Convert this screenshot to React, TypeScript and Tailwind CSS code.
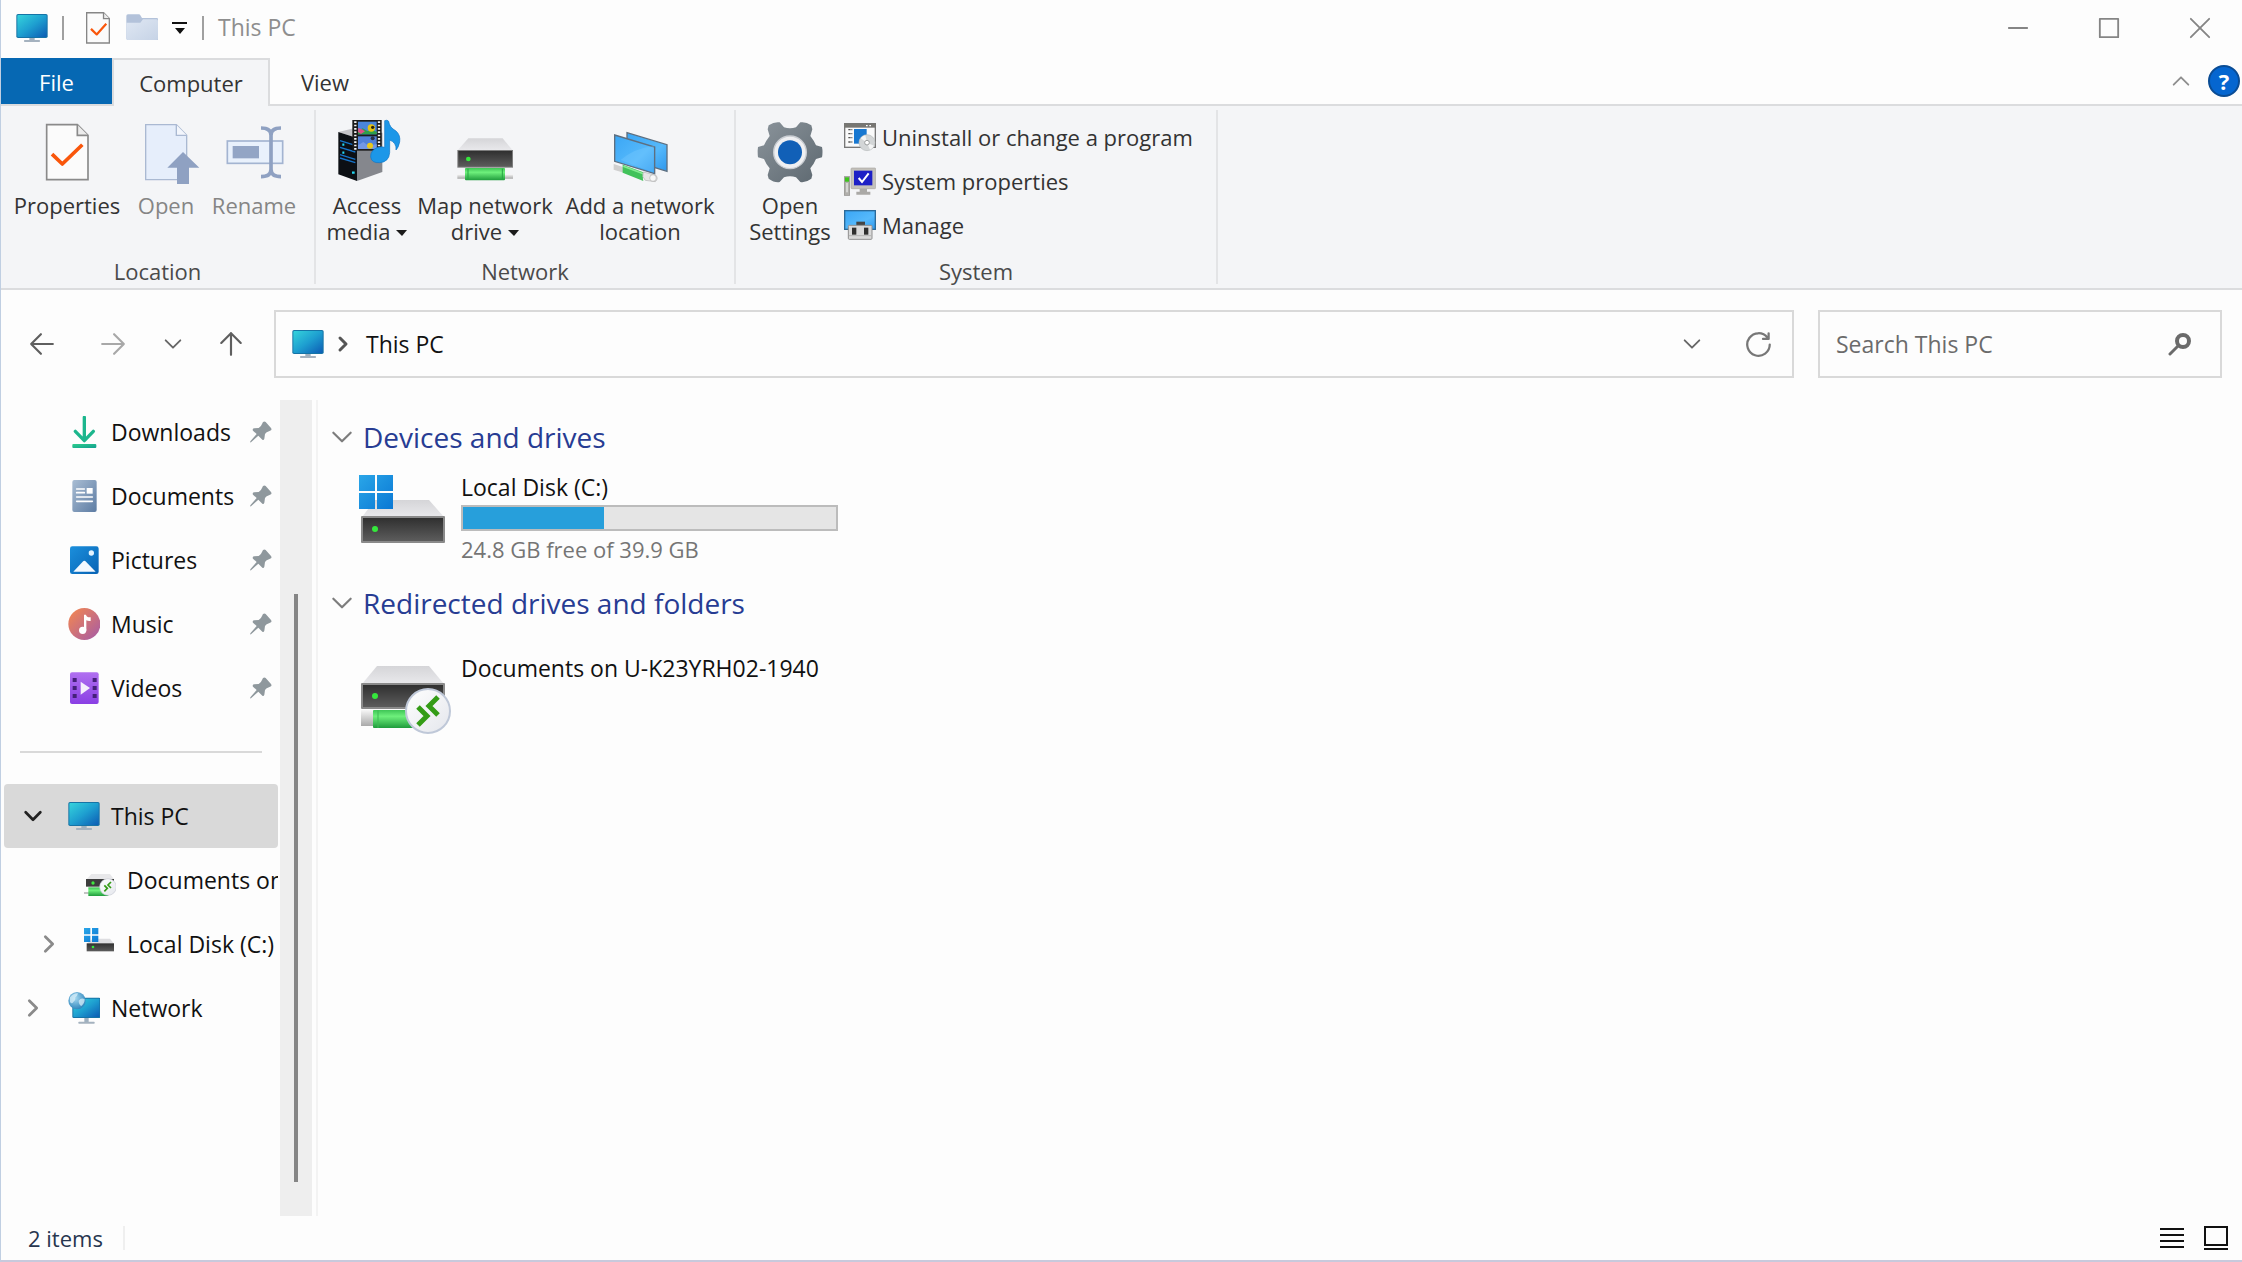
import { ReactNode, useState } from "react";

const lineIcon = { fill: "none", strokeLinecap: "round", strokeLinejoin: "round" } as const;

// Gradients shared by every icon on the page
const Gradients = () => (
  <svg className="absolute h-0 w-0" aria-hidden="true">
    <defs>
      <linearGradient id="screen" x1="0" y1="0" x2="1" y2="1">
        <stop offset="0" stopColor="#35d3dc" />
        <stop offset="0.5" stopColor="#1e9fd0" />
        <stop offset="1" stopColor="#0c5cb4" />
      </linearGradient>
      <linearGradient id="folder" x1="0" y1="0" x2="1" y2="1">
        <stop offset="0" stopColor="#dfe7f3" />
        <stop offset="1" stopColor="#c6d3e6" />
      </linearGradient>
      <linearGradient id="driveFront" x1="0" y1="0" x2="0" y2="1">
        <stop offset="0" stopColor="#303030" />
        <stop offset="1" stopColor="#5c5c5c" />
      </linearGradient>
      <linearGradient id="driveTop" x1="0" y1="0" x2="0" y2="1">
        <stop offset="0" stopColor="#d5d5d8" />
        <stop offset="1" stopColor="#e9e9ec" />
      </linearGradient>
      <linearGradient id="pipe" x1="0" y1="0" x2="0" y2="1">
        <stop offset="0" stopColor="#3fc556" />
        <stop offset="0.35" stopColor="#6ef07c" />
        <stop offset="1" stopColor="#1f9b3c" />
      </linearGradient>
      <linearGradient id="stub" x1="0" y1="0" x2="0" y2="1">
        <stop offset="0" stopColor="#f6f6f6" />
        <stop offset="1" stopColor="#a9a9a9" />
      </linearGradient>
      <linearGradient id="sky" x1="0" y1="0" x2="1" y2="1">
        <stop offset="0" stopColor="#3aa6f5" />
        <stop offset="0.6" stopColor="#56b9fb" />
        <stop offset="1" stopColor="#2d97ec" />
      </linearGradient>
      <linearGradient id="gear" x1="0" y1="0" x2="1" y2="1">
        <stop offset="0" stopColor="#8b949b" />
        <stop offset="1" stopColor="#5d6870" />
      </linearGradient>
      <linearGradient id="winLogo" x1="0" y1="0" x2="1" y2="1">
        <stop offset="0" stopColor="#2aa6e8" />
        <stop offset="1" stopColor="#0a78d4" />
      </linearGradient>
      <linearGradient id="download" x1="0" y1="0" x2="1" y2="1">
        <stop offset="0" stopColor="#2fce8d" />
        <stop offset="1" stopColor="#0f9e8e" />
      </linearGradient>
      <linearGradient id="document" x1="0" y1="0" x2="1" y2="1">
        <stop offset="0" stopColor="#a9bdd3" />
        <stop offset="1" stopColor="#5d7ca3" />
      </linearGradient>
      <linearGradient id="music" x1="0" y1="0" x2="1" y2="1">
        <stop offset="0.1" stopColor="#ee8456" />
        <stop offset="1" stopColor="#a45aa8" />
      </linearGradient>
      <linearGradient id="video" x1="0" y1="0" x2="0" y2="1">
        <stop offset="0" stopColor="#b070f0" />
        <stop offset="1" stopColor="#8a3fe4" />
      </linearGradient>
      <linearGradient id="picture" x1="0" y1="0" x2="1" y2="1">
        <stop offset="0" stopColor="#1b8fdc" />
        <stop offset="1" stopColor="#0863b4" />
      </linearGradient>
      <radialGradient id="globe" cx="0.4" cy="0.35" r="0.7">
        <stop offset="0" stopColor="#a5d8f0" />
        <stop offset="1" stopColor="#2a82ba" />
      </radialGradient>
      <linearGradient id="badge" x1="0" y1="0" x2="1" y2="1">
        <stop offset="0" stopColor="#ffffff" />
        <stop offset="1" stopColor="#e4e6ec" />
      </linearGradient>
    </defs>
  </svg>
);

const MonitorIcon = () => (
  <svg className="size-8 shrink-0" viewBox="0 0 96 96">
    <path d="M40 76h16v10H40z" fill="#9fb0bf" />
    <rect x="24" y="84" width="48" height="6" rx="2" fill="#a5b2bf" />
    <rect x="1" y="6" width="94" height="72" rx="5" fill="#1674a6" />
    <rect x="4" y="9" width="88" height="66" rx="3" fill="url(#screen)" />
  </svg>
);

const CheckedPage = ({ className }: { className: string }) => (
  <svg className={className} viewBox="137 370 130 174">
    <path d="M140 374h92l32 32v133H140z" fill="#fbfbfb" stroke="#868686" strokeWidth="8" />
    <path d="M232 374v32h32" fill="#ececec" stroke="#868686" strokeWidth="7" />
    <path d="M168 466l27 26 48-54" stroke="#f9560b" strokeWidth="12" {...lineIcon} strokeLinecap="square" />
  </svg>
);

const FolderIcon = () => (
  <svg className="size-8 shrink-0" viewBox="378 36 96 96">
    <path d="M379 48q0-5 5-5h32q4 0 6 4l4 7h44q5 0 5 5v56q0 5-5 5h-86q-5 0-5-5z" fill="#b3c2da" />
    <path d="M379 68h42l8-10h40q5 0 5 5v52q0 5-5 5h-85q-5 0-5-5z" fill="url(#folder)" />
  </svg>
);

const RibbonPropertiesIcon = () => (
  <svg className="size-16 overflow-visible" viewBox="105 360 192 192">
    <path d="M140 374h92l32 32v133H140z" fill="#fbfbfb" stroke="#8a8a8a" strokeWidth="5" />
    <path d="M232 374v32h32" fill="#ececec" stroke="#8a8a8a" strokeWidth="5" />
    <path d="M160 466l27 26 56-54" stroke="#f9560b" strokeWidth="11" {...lineIcon} strokeLinecap="square" />
  </svg>
);

const RibbonOpenIcon = () => (
  <svg className="size-16 overflow-visible" viewBox="406 360 192 192">
    <path d="M441 374h92l31 32v133H441z" fill="#e6eefb" stroke="#aab9d2" strokeWidth="4" />
    <path d="M533 374v32h31" fill="#f3f6fc" stroke="#aab9d2" strokeWidth="4" />
    <path d="M553 456l49 47h-31v49h-36v-49h-29z" fill="#8fa1c2" />
  </svg>
);

const RibbonRenameIcon = () => (
  <svg className="size-16 overflow-visible" viewBox="670 360 192 192">
    <rect x="686" y="423" width="166" height="67" fill="#e9f1fc" stroke="#a3b4d1" strokeWidth="5" />
    <rect x="702" y="438" width="79" height="37" fill="#93a5c5" />
    <path
      d="M787 384q30 0 30 22v102q0 22-30 22M847 384q-30 0-30 22v102q0 22 30 22"
      fill="none"
      stroke="#8fa1c2"
      strokeWidth="11"
    />
  </svg>
);

const AccessMediaIcon = () => (
  <svg className="size-16 overflow-visible" viewBox="75 60 192 192">
    <path d="M85 96l50-12 82 14-76 16z" fill="#c4c4c8" />
    <path d="M85 96l56 18v129l-56-20z" fill="#0c0f14" />
    <path d="M141 114l76-16v118l-76 27z" fill="#85878d" />
    <path d="M90 122l46 14M90 142l46 14M90 164l46 14M90 174l46 14" stroke="#1773c9" strokeWidth="4" />
    <path d="M97 134h6M97 158h6M126 218h8" stroke="#22d9f5" strokeWidth="7" />
    <rect x="127" y="60" width="88" height="92" fill="#1c1c1c" />
    <rect x="144" y="65" width="56" height="38" fill="#4a86dc" />
    <rect x="144" y="109" width="56" height="38" fill="#4f80d8" />
    <path d="M144 92l14-7 14 8 14-2 14 4v8h-56z" fill="#2ea04a" />
    <path d="M144 136l16-10 16 12 24-6v15h-56z" fill="#7398e4" />
    <path d="M145 84l10 4 10 6-12 8-9-6z" fill="#e04f86" />
    <circle cx="184" cy="84" r="11" fill="#e6c313" />
    <circle cx="188" cy="82" r="5" fill="#27220e" />
    <circle cx="180" cy="137" r="9" fill="#e9c81c" />
    <circle cx="188" cy="115" r="6" fill="#2b3049" />
    <path d="M136 64v86M207 64v86" stroke="#f5f5f5" strokeWidth="7" strokeDasharray="5 5" />
    <path
      d="M224 62q8-4 12 2 2 18 22 29 14 12 11 33-4 18-11 24 2-22-19-30v38q-2 28-30 30-24 2-27-17-1-21 22-29 11-3 20 0z"
      fill="#1c97e8"
      stroke="#0f76c6"
      strokeWidth="2"
    />
  </svg>
);

const MapDriveIcon = () => (
  <svg className="size-16 overflow-visible" viewBox="432 60 192 192">
    <path d="M478 115h103l30 36H446z" fill="url(#driveTop)" />
    <rect x="445" y="150" width="167" height="53" fill="#7d7d7d" />
    <rect x="448" y="153" width="161" height="47" fill="url(#driveFront)" />
    <circle cx="478" cy="177" r="7" fill="#35e83c" />
    <path d="M445 223h24v13h-24zM588 223h24v13h-24z" fill="url(#stub)" />
    <rect x="468" y="204" width="120" height="37" rx="3" fill="url(#pipe)" />
    <path d="M477 206v33M580 206v33" stroke="#27a543" strokeWidth="3" />
  </svg>
);

const AddLocationIcon = () => (
  <svg className="size-16 overflow-visible" viewBox="894 60 192 192">
    <path d="M951 98l120 36v80l-120-37z" fill="url(#sky)" stroke="#5e6f80" strokeWidth="4" />
    <path d="M911 192l30 10v16l-30-9z" fill="#cfcfcf" />
    <path d="M938 194l66 24q-8 12-4 25l-62-25z" fill="#41c25a" />
    <path d="M940 199l60 22" stroke="#86ec92" strokeWidth="5" />
    <path d="M1000 216l38 10q8 10-2 19l-30-4q-12-10-6-25z" fill="#e6e6e6" stroke="#b4b4b4" strokeWidth="2" />
    <circle cx="1029" cy="234" r="10" fill="#f8f8f8" stroke="#b0b0b0" strokeWidth="2" />
    <path d="M914 105l120 36v80l-120-37z" fill="url(#sky)" stroke="#5e6f80" strokeWidth="4" />
    <path d="M932 180q40-35 99-42v80z" fill="#7ccbff" opacity="0.35" />
  </svg>
);

const GearIcon = () => (
  <svg className="size-16 overflow-visible" viewBox="84 60 192 192">
    <path
      d="M116 76q18-12 33-9l13 15q18 6 36 0l13-15q16-3 33 9l3 12-6 20q11 14 17 28l18 5q3 15 0 31l-18 5q-6 15-17 28l6 20-3 11q-17 13-33 10l-13-14q-18-6-36 0l-13 14q-15 3-33-10l-3-11 6-20q-11-13-17-28l-18-5q-2-16 0-31l18-5q6-14 17-28l-6-20z"
      fill="url(#gear)"
    />
    <circle cx="180" cy="157" r="49" fill="#eff0f2" />
    <circle cx="180" cy="157" r="49" fill="none" stroke="#c9cdd2" strokeWidth="4" />
    <circle cx="180" cy="157" r="36" fill="#1160b7" />
  </svg>
);

const UninstallIcon = () => (
  <svg className="size-8 shrink-0" viewBox="342 66 96 96">
    <rect x="344" y="74" width="92" height="71" fill="#fafafa" stroke="#777" strokeWidth="4" />
    <path d="M343 80h94" stroke="#777672" strokeWidth="12" />
    <path d="M408 80h5M418 80h5" stroke="#fff" strokeWidth="4" />
    <path d="M355 92h12M355 104h12M355 116h12M355 129h12" stroke="#555" strokeWidth="4" strokeDasharray="7 2" />
    <rect x="372" y="90" width="38" height="44" fill="#1878d1" />
    <circle cx="411" cy="131" r="24" fill="#d3d6d7" stroke="#b8bcbd" strokeWidth="2" />
    <path d="M411 131l-19-13a24 24 0 0 1 14-9zM411 131l21 9a24 24 0 0 1-12 12z" fill="#f4f5f5" />
    <circle cx="411" cy="131" r="7" fill="#fff" stroke="#9c9f9f" strokeWidth="3" />
  </svg>
);

const SystemPropertiesIcon = () => (
  <svg className="size-8 shrink-0" viewBox="342 198 96 96">
    <rect x="363" y="207" width="74" height="62" rx="3" fill="#c3c1bb" stroke="#a9a8a4" strokeWidth="2" />
    <rect x="372" y="215" width="55" height="44" fill="#1d20c6" />
    <path d="M386 237l10 12 20-26" fill="none" stroke="#fff" strokeWidth="6" />
    <path d="M389 269h22v9h10v9h-42v-9h10z" fill="#aaa9a6" />
    <rect x="343" y="233" width="16" height="56" fill="#b0afab" stroke="#8d8c89" strokeWidth="2" />
    <rect x="345" y="235" width="12" height="13" fill="#3dc41c" />
    <rect x="349" y="252" width="4" height="28" fill="#e9e9e9" />
  </svg>
);

const ManageIcon = () => (
  <svg className="size-8 shrink-0" viewBox="342 328 96 96">
    <rect x="344" y="333" width="92" height="56" fill="url(#sky)" stroke="#2b6a99" strokeWidth="4" />
    <path d="M379 366h26v12h-26z" fill="#444" />
    <rect x="355" y="377" width="71" height="42" rx="3" fill="#d9d9d9" stroke="#8f8f8f" strokeWidth="3" />
    <path d="M357 408h67" stroke="#b3b3b3" strokeWidth="3" />
    <rect x="366" y="384" width="13" height="21" fill="#2e2e2e" />
    <rect x="402" y="384" width="13" height="21" fill="#2e2e2e" />
  </svg>
);

const DownloadsIcon = () => (
  <svg className="size-8 shrink-0" viewBox="204 78 96 96">
    <path d="M253 82v68M226 124l27 28 27-28" stroke="#1cb68d" strokeWidth="10" {...lineIcon} />
    <rect x="217" y="162" width="72" height="12" rx="3" fill="url(#download)" />
  </svg>
);

const DocumentsIcon = () => (
  <svg className="size-8 shrink-0" viewBox="204 270 96 96">
    <rect x="217" y="270" width="73" height="96" rx="6" fill="url(#document)" />
    <path d="M230 297h23M230 308h23M230 321h47M230 334h47" stroke="#fff" strokeWidth="5" strokeLinecap="round" />
    <rect x="260" y="294" width="18" height="17" fill="#fff" />
  </svg>
);

const PicturesIcon = () => (
  <svg className="size-8 shrink-0" viewBox="204 462 96 96">
    <rect x="210" y="469" width="86" height="83" rx="7" fill="url(#picture)" />
    <path d="M220 545l28-30q5-5 10 0l29 30z" fill="#f4f9ff" />
    <circle cx="274" cy="489" r="8" fill="#e4f4ff" />
  </svg>
);

const MusicIcon = () => (
  <svg className="size-8 shrink-0" viewBox="204 654 96 96">
    <circle cx="253" cy="702" r="48" fill="url(#music)" />
    <circle cx="248" cy="721" r="11" fill="#fff" />
    <path d="M252 674h6q2 9 14 8v11q-8 1-13-2v30h-7z" fill="#fff" />
  </svg>
);

const VideosIcon = () => (
  <svg className="size-8 shrink-0" viewBox="204 846 96 96">
    <rect x="210" y="847" width="86" height="95" rx="6" fill="url(#video)" />
    <path d="M224 864v62M284 864v62" stroke="#45207a" strokeWidth="12" strokeDasharray="12 12" />
    <path d="M242 875l28 19-28 20z" fill="#f5eefc" />
  </svg>
);

const NetworkIcon = () => (
  <svg className="size-8 shrink-0" viewBox="204 696 96 96">
    <path d="M253 772h13v14h-13z" fill="#9fb0bf" />
    <rect x="235" y="785" width="49" height="6" rx="2" fill="#a5b2bf" />
    <rect x="217" y="713" width="84" height="61" rx="4" fill="#1674a6" />
    <rect x="220" y="716" width="78" height="55" rx="2" fill="url(#screen)" />
    <circle cx="231" cy="722" r="26" fill="url(#globe)" />
    <path
      d="M210 712q12-14 24-12-2 10-8 12 2 8-6 14-4 8-10 0zM236 722q8-10 18-4 0 12-10 20-8-4-8-16z"
      fill="#d7eef8"
      opacity="0.75"
    />
  </svg>
);

const RemoteArrows = () => (
  <path d="M-10-4l9 9-9 9M10-14l-9 9 9 9" fill="none" stroke="#349c16" strokeWidth="5" />
);

// Redirected drive, small version for the navigation tree
const SmallRemoteDriveIcon = () => (
  <svg className="size-8 shrink-0" viewBox="252 312 96 96">
    <path d="M274 342h56l12 16h-82z" fill="#e8e8ea" />
    <rect x="258" y="357" width="84" height="23" fill="#3d3d3d" />
    <circle cx="279" cy="369" r="5" fill="#3fe83f" />
    <path d="M252 396h18v6h-18z" fill="#c3c3c3" />
    <rect x="265" y="382" width="60" height="26" fill="url(#pipe)" />
    <circle cx="324" cy="381" r="25" fill="url(#badge)" stroke="#c9ccd4" strokeWidth="2" />
    <g transform="translate(323 380)">
      <RemoteArrows />
    </g>
  </svg>
);

const SmallLocalDiskIcon = () => (
  <svg className="size-8 shrink-0" viewBox="252 504 96 96">
    <path d="M278 536h52l12 15h-82z" fill="#dedee1" />
    <rect x="260" y="550" width="82" height="24" fill="url(#driveFront)" />
    <circle cx="279" cy="561" r="4" fill="#35e83c" />
    <path d="M252 504h19v19h-19zM276 504h19v19h-19zM252 527h19v19h-19zM276 527h19v19h-19z" fill="url(#winLogo)" />
  </svg>
);

const LocalDiskIcon = () => (
  <svg className="h-19 w-24 shrink-0" viewBox="358 472 96 76">
    <path d="M376 501h54l15 17h-82z" fill="url(#driveTop)" />
    <rect x="362" y="517" width="84" height="27" rx="1" fill="#8a8a8a" />
    <rect x="364" y="519" width="80" height="23" fill="url(#driveFront)" />
    <circle cx="376" cy="530" r="3" fill="#35e83c" />
    <path d="M360 476h16v16h-16zM378 476h16v16h-16zM360 494h16v16h-16zM378 494h16v16h-16z" fill="url(#winLogo)" />
  </svg>
);

const RemoteDriveIcon = () => (
  <svg className="mt-[6px] h-19 w-24 shrink-0" viewBox="358 660 96 76">
    <path d="M378 666h52l15 18h-82z" fill="url(#driveTop)" />
    <rect x="362" y="683" width="84" height="26" rx="1" fill="#8a8a8a" />
    <rect x="364" y="685" width="80" height="22" fill="url(#driveFront)" />
    <circle cx="376" cy="696" r="3" fill="#35e83c" />
    <rect x="362" y="710" width="13" height="16" fill="url(#stub)" />
    <rect x="374" y="710" width="50" height="18" rx="1" fill="url(#pipe)" />
    <path d="M379 710v18" stroke="#3cbb52" />
    <circle cx="429" cy="711" r="22" fill="url(#badge)" stroke="#bfc8d8" strokeWidth="2" />
    <g transform="translate(429 711)">
      <RemoteArrows />
    </g>
  </svg>
);

const PinIcon = () => (
  <svg className="size-[22px] shrink-0" viewBox="753 94 66 66">
    <path
      d="M792 97q5-3 8 0l16 18q3 4 0 7l-6 3q-8 2-12 8l-2 14q-2 6-6 3l-12-12-22 20q-3 1-2-3l19-22-11-10q-3-5 3-7l14-1q8-5 10-12z"
      fill="#8f989d"
    />
  </svg>
);

const SearchIcon = () => (
  <svg className="size-6" viewBox="0 0 24 24">
    <circle cx="15" cy="9" r="6" fill="none" stroke="#6b6b6b" strokeWidth="4" />
    <path d="M10 14l-8 8" stroke="#6b6b6b" strokeWidth="3" strokeLinecap="round" />
  </svg>
);

const Chevron = ({ path, className }: { path: string; className: string }) => (
  <svg className={className} viewBox="0 0 24 24" stroke="currentColor" strokeWidth="2" {...lineIcon}>
    <path d={path} />
  </svg>
);

const downPath = "M4 8l8 8 8-8";
const upPath = "M4 16l8-8 8 8";
const rightPath = "M8 4l8 8-8 8";

const DropArrow = () => (
  <svg className="mb-[3px] ml-[6px] inline-block h-[6px] w-[11px] align-middle" viewBox="0 0 11 6">
    <path d="M0 0h11L6 6z" fill="#1b1b1b" />
  </svg>
);

type RibbonButtonProps = {
  icon: ReactNode;
  lines: string[];
  width: string;
  drop?: boolean;
  disabled?: boolean;
};

const RibbonButton = ({ icon, lines, width, drop, disabled }: RibbonButtonProps) => (
  <button
    type="button"
    disabled={disabled}
    className={`flex flex-col items-center gap-2 whitespace-nowrap pt-[14px] leading-[26px] ${width} ${
      disabled ? "text-[#858585]" : "text-[#333]"
    }`}
  >
    {icon}
    <span>
      {lines.map((line, i) => (
        <span key={line} className="block">
          {line}
          {drop && i === lines.length - 1 && <DropArrow />}
        </span>
      ))}
    </span>
  </button>
);

type RibbonGroupProps = { title: string; width: string; padding: string; children: ReactNode };

const RibbonGroup = ({ title, width, padding, children }: RibbonGroupProps) => (
  <section className={`my-1 flex flex-col border-r-2 border-[#e3e4e6] ${width}`}>
    <div className={`-mt-1 flex h-[152px] ${padding}`}>{children}</div>
    <h2 className="text-center leading-[26px] text-[#4a4a4a]">{title}</h2>
  </section>
);

const systemLinks = [
  { text: "Uninstall or change a program", icon: <UninstallIcon /> },
  { text: "System properties", icon: <SystemPropertiesIcon /> },
  { text: "Manage", icon: <ManageIcon /> },
];

const quickAccess = [
  { name: "Downloads", icon: <DownloadsIcon /> },
  { name: "Documents", icon: <DocumentsIcon /> },
  { name: "Pictures", icon: <PicturesIcon /> },
  { name: "Music", icon: <MusicIcon /> },
  { name: "Videos", icon: <VideosIcon /> },
];

const rowStyle = "flex h-16 items-center gap-[11px] overflow-hidden whitespace-nowrap";

const Sidebar = () => (
  <nav className="w-[277px] shrink-0 overflow-hidden pl-[3px]">
    {quickAccess.map((item) => (
      <a key={item.name} href="#" className={`${rowStyle} pl-16 pr-[6px]`}>
        {item.icon}
        <span className="flex-1">{item.name}</span>
        <PinIcon />
      </a>
    ))}
    <hr className="mb-[31px] ml-4 mr-4 mt-[31px] border-t-2 border-[#d9d9d9]" />
    <a href="#" className={`${rowStyle} rounded-sm bg-[#d9d9d9] pl-[18px]`}>
      <Chevron path={downPath} className="mr-[13px] size-[22px] stroke-3 text-[#222]" />
      <MonitorIcon />
      <span>This PC</span>
    </a>
    <a href="#" className={`${rowStyle} pl-20`}>
      <SmallRemoteDriveIcon />
      <span>Documents on U-K23YRH02-1940</span>
    </a>
    <a href="#" className={`${rowStyle} pl-[34px]`}>
      <Chevron path={rightPath} className="mr-[13px] size-[22px] stroke-3 text-[#8a8a8a]" />
      <SmallLocalDiskIcon />
      <span>Local Disk (C:)</span>
    </a>
    <a href="#" className={`${rowStyle} pl-[18px]`}>
      <Chevron path={rightPath} className="mr-[13px] size-[22px] stroke-3 text-[#8a8a8a]" />
      <NetworkIcon />
      <span>Network</span>
    </a>
  </nav>
);

const SectionHeading = ({ title }: { title: string }) => (
  <h2 className="flex items-center gap-2 text-[28px] leading-9 text-[#273c93]">
    <Chevron path={downPath} className="size-[26px] text-[#7d7d7d]" />
    {title}
  </h2>
);

const App = () => {
  const [search, setSearch] = useState("");
  const total = 39.9;
  const free = 24.8;

  return (
    <div className="flex min-h-screen flex-col border-b-2 border-l border-b-[#c8c9dc] border-l-[#c0cfe2] bg-[#fdfdfd] font-['Open_Sans','Noto_Sans',sans-serif] text-[23px] text-[#111]">
      <Gradients />

      <header className="flex h-[58px] items-center justify-between pb-[3px] pl-[15px] pr-[14px]">
        <div className="flex h-10 items-center">
          <MonitorIcon />
          <span className="ml-[14px] h-6 w-[2px] bg-[#a0a0a0]" />
          <button type="button" aria-label="Properties" className="ml-[22px]">
            <CheckedPage className="h-8 w-6" />
          </button>
          <button type="button" aria-label="New folder" className="ml-4">
            <FolderIcon />
          </button>
          <button type="button" aria-label="Customize Quick Access Toolbar" className="ml-[14px]">
            <svg className="h-3 w-[15px]" viewBox="0 0 15 12">
              <path d="M0 0h15v2H0zM3 6h10l-5 6z" fill="#111" />
            </svg>
          </button>
          <span className="ml-[15px] h-6 w-[2px] bg-[#a0a0a0]" />
          <h1 className="ml-[14px] text-[#8e8e8e]">This PC</h1>
        </div>
        <div className="flex items-center gap-[59px] pr-[12px] text-[#858585]">
          <button type="button" aria-label="Minimize" className="w-8">
            <Chevron path="M2 12h20" className="mx-auto size-[22px]" />
          </button>
          <button type="button" aria-label="Maximize" className="w-8">
            <Chevron path="M2 2h20v20H2z" className="mx-auto size-[22px]" />
          </button>
          <button type="button" aria-label="Close" className="w-8">
            <Chevron path="M2 2l20 20M22 2L2 22" className="mx-auto size-[22px]" />
          </button>
        </div>
      </header>

      <div className="flex h-12 items-stretch border-b-2 border-[#dbdcde] text-[22px] text-[#333]">
        <button type="button" className="w-[111px] bg-[#0668b3] pt-[2px] text-white">
          File
        </button>
        <button type="button" className="-mb-[2px] w-[158px] border-x-2 border-t-2 border-[#dbdcde] bg-[#f4f5f7]">
          Computer
        </button>
        <button type="button" className="w-[110px] pt-[2px]">
          View
        </button>
        <div className="ml-auto flex items-center gap-4 pr-[2px]">
          <button type="button" aria-label="Minimize the Ribbon">
            <Chevron path={upPath} className="size-[22px] text-[#8e8e8e]" />
          </button>
          <button
            type="button"
            aria-label="Help"
            className="size-8 rounded-full border-2 border-[#0a4c94] bg-[#0566d0] font-bold leading-7 text-white"
          >
            ?
          </button>
        </div>
      </div>

      <div className="flex border-b-2 border-[#dbdcde] bg-[#f4f5f7] text-[22px]">
        <RibbonGroup title="Location" width="w-[315px]" padding="pl-[9px]">
          <RibbonButton icon={<RibbonPropertiesIcon />} lines={["Properties"]} width="w-[114px]" />
          <RibbonButton icon={<RibbonOpenIcon />} lines={["Open"]} width="w-[84px]" disabled />
          <RibbonButton icon={<RibbonRenameIcon />} lines={["Rename"]} width="w-[92px]" disabled />
        </RibbonGroup>
        <RibbonGroup title="Network" width="w-[420px]" padding="pl-[7px]">
          <RibbonButton icon={<AccessMediaIcon />} lines={["Access", "media"]} width="w-[88px]" drop />
          <RibbonButton icon={<MapDriveIcon />} lines={["Map network", "drive"]} width="w-[148px]" drop />
          <RibbonButton icon={<AddLocationIcon />} lines={["Add a network", "location"]} width="w-[162px]" />
        </RibbonGroup>
        <RibbonGroup title="System" width="w-[482px]" padding="pl-[7px]">
          <RibbonButton icon={<GearIcon />} lines={["Open", "Settings"]} width="w-[94px]" />
          <div className="ml-[7px] flex flex-col pt-[9px]">
            {systemLinks.map((link) => (
              <button
                key={link.text}
                type="button"
                className="flex h-11 items-center gap-[6px] whitespace-nowrap text-[#333]"
              >
                {link.icon}
                {link.text}
              </button>
            ))}
          </div>
        </RibbonGroup>
      </div>

      <div className="flex items-center py-[20px] pr-5">
        <div className="flex w-[273px] items-center pl-7">
          <button type="button" aria-label="Back">
            <Chevron path="M22 12H2M11 3l-9 9 9 9" className="size-[26px] text-[#5f5f5f]" />
          </button>
          <button type="button" aria-label="Forward" className="ml-[45px]">
            <Chevron path="M2 12h20M13 3l9 9-9 9" className="size-[26px] text-[#a8a8a8]" />
          </button>
          <button type="button" aria-label="Recent locations" className="ml-9">
            <Chevron path={downPath} className="size-[22px] text-[#666]" />
          </button>
          <button type="button" aria-label="Up" className="ml-[34px]">
            <Chevron path="M12 22V2M3 11l9-9 9 9" className="size-[26px] text-[#5f5f5f]" />
          </button>
        </div>
        <div className="flex h-[68px] flex-1 items-center border-2 border-[#d9d9d9] pl-4 pr-5">
          <MonitorIcon />
          <Chevron path={rightPath} className="ml-[10px] size-[18px] stroke-4 text-[#555]" />
          <span className="ml-[14px] flex-1">This PC</span>
          <button type="button" aria-label="Previous locations">
            <Chevron path={downPath} className="size-[22px] text-[#666]" />
          </button>
          <button type="button" aria-label="Refresh" className="ml-[42px]">
            <Chevron path="M20 6a10 10 0 1 0 2 6M21 2v5h-5" className="size-[27px] text-[#777]" />
          </button>
        </div>
        <label className="ml-6 flex h-[68px] w-[404px] items-center border-2 border-[#d9d9d9] pl-4 pr-7">
          <input
            type="text"
            aria-label="Search This PC"
            placeholder="Search This PC"
            value={search}
            onChange={(e) => setSearch(e.target.value)}
            className="min-w-0 flex-1 bg-transparent outline-none placeholder:text-[#6b6b6b]"
          />
          <SearchIcon />
        </label>
      </div>

      <div className="mt-[2px] flex flex-1">
        <Sidebar />
        <div className="ml-[2px] flex w-8 flex-col items-center bg-[#eee]">
          <div className="mb-[34px] mt-[194px] w-1 flex-1 bg-[#858585]" />
        </div>
        <main className="ml-1 flex-1 border-l-2 border-[#f3f3f3] pl-[11px] pt-[19px]">
          <SectionHeading title="Devices and drives" />
          <div className="ml-[28px] mt-4 flex gap-2">
            <LocalDiskIcon />
            <div className="pt-[2px] leading-7">
              <p>Local Disk (C:)</p>
              <div className="mt-1 h-[26px] w-[377px] border-2 border-[#bcbcbc] bg-[#e5e5e5]">
                <div className="h-full bg-[#279fdb]" style={{ width: `${((total - free) / total) * 100}%` }} />
              </div>
              <p className="mt-1 text-[22px] text-[#757575]">
                {free} GB free of {total} GB
              </p>
            </div>
          </div>
          <div className="mt-[22px]">
            <SectionHeading title="Redirected drives and folders" />
          </div>
          <div className="ml-[28px] mt-[33px] flex gap-2">
            <RemoteDriveIcon />
            <p className="leading-7">Documents on U-K23YRH02-1940</p>
          </div>
        </main>
      </div>

      <footer className="flex h-11 items-center pl-[27px] pr-[14px] text-[22px] text-[#27364f]">
        <span>2 items</span>
        <span className="ml-5 h-6 w-[2px] bg-[#efefef]" />
        <button type="button" aria-label="Details view" className="ml-auto">
          <svg className="size-6" viewBox="0 0 24 24">
            <path d="M0 3h24M0 9h24M0 15h24M0 21h24" stroke="#111" strokeWidth="2" />
          </svg>
        </button>
        <button type="button" aria-label="Large icons view" className="ml-5">
          <svg className="size-6" viewBox="0 0 24 24">
            <path d="M1 1h22v18H1zM0 23h24" fill="none" stroke="#111" strokeWidth="2" />
          </svg>
        </button>
      </footer>
    </div>
  );
};

export default App;
